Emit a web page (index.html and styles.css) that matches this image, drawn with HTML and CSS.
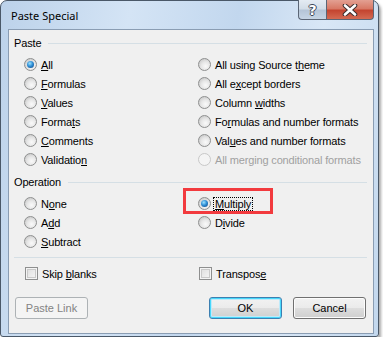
FILE: index.html
```html
<!DOCTYPE html>
<html lang="en">
  <head>
    <meta charset="UTF-8" />
    <meta name="viewport" content="width=device-width, initial-scale=1.0" />
    <title>Paste Special</title>
    <link rel="stylesheet" href="styles.css">
  </head>
  <body>
    <div class="window">
      <div class="titlebar">
        <span class="title">Paste Special</span>
        <div class="caption-buttons">
          <span class="cap-btn help">?</span>
          <span class="cap-btn close">
            <svg width="16" height="12" viewBox="0 0 16 12">
              <path d="M3 1.5 L13 10.5 M13 1.5 L3 10.5" stroke="#3a2c2c" stroke-width="4.6" stroke-linecap="round" fill="none" />
              <path d="M3 1.5 L13 10.5 M13 1.5 L3 10.5" stroke="#ffffff" stroke-width="2.6" stroke-linecap="round" fill="none" />
            </svg>
          </span>
        </div>
      </div>
      <div class="client">
        <div class="group-head"><span>Paste</span></div>
        <div class="options">
          <div class="col">
            <div class="opt"><span class="radio checked"></span><span><u>A</u>ll</span></div>
            <div class="opt"><span class="radio"></span><span><u>F</u>ormulas</span></div>
            <div class="opt"><span class="radio"></span><span><u>V</u>alues</span></div>
            <div class="opt"><span class="radio"></span><span>Forma<u>t</u>s</span></div>
            <div class="opt"><span class="radio"></span><span><u>C</u>omments</span></div>
            <div class="opt"><span class="radio"></span><span>Validatio<u>n</u></span></div>
          </div>
          <div class="col">
            <div class="opt"><span class="radio"></span><span>All using Source t<u>h</u>eme</span></div>
            <div class="opt"><span class="radio"></span><span>All e<u>x</u>cept borders</span></div>
            <div class="opt"><span class="radio"></span><span>Column <u>w</u>idths</span></div>
            <div class="opt"><span class="radio"></span><span>Fo<u>r</u>mulas and number formats</span></div>
            <div class="opt"><span class="radio"></span><span>Val<u>u</u>es and number formats</span></div>
            <div class="opt disabled"><span class="radio"></span><span>All merging conditional formats</span></div>
          </div>
        </div>

        <div class="group-head operation"><span>Operation</span></div>
        <div class="options">
          <div class="col">
            <div class="opt"><span class="radio"></span><span>N<u>o</u>ne</span></div>
            <div class="opt"><span class="radio"></span><span>A<u>d</u>d</span></div>
            <div class="opt"><span class="radio"></span><span><u>S</u>ubtract</span></div>
          </div>
          <div class="col">
            <div class="opt marked"><span class="radio checked"></span><span class="focus"><u>M</u>ultiply</span></div>
            <div class="opt"><span class="radio"></span><span>D<u>i</u>vide</span></div>
          </div>
        </div>

        <div class="separator"></div>

        <div class="options checks">
          <div class="col">
            <div class="opt"><span class="checkbox"></span><span>Skip <u>b</u>lanks</span></div>
          </div>
          <div class="col">
            <div class="opt"><span class="checkbox"></span><span>Transpos<u>e</u></span></div>
          </div>
        </div>

        <div class="buttons">
          <button class="btn" disabled>Paste Link</button>
          <span class="spacer"></span>
          <button class="btn default">OK</button>
          <button class="btn">Cancel</button>
        </div>
      </div>
    </div>
  </body>
</html>
```

FILE: styles.css
```css
body {
  margin: 0;
  background-color: #ffffff;
  font-family: "Liberation Sans", Arial, sans-serif;
  font-size: 11px;
  letter-spacing: -0.15px;
  color: #000;
}
.window {
  box-sizing: border-box;
  width: 379px;
  height: 337px;
  border: 1px solid #4a5868;
  border-radius: 7px 7px 3px 3px;
  padding: 0 4px 2px 7px;
  background: linear-gradient(100deg, #bcd2ea 0%, #d4e4f5 30%, #c2d7ee 55%, #d9e7f6 75%, #c3d8ee 100%);
  box-shadow: 2px 3px 3px rgba(0, 0, 0, 0.35);
  display: flex;
  flex-direction: column;
}
.titlebar {
  height: 28px;
  display: flex;
  align-items: flex-start;
}
.title {
  font-family: "Noto Sans", "Open Sans", sans-serif;
  font-size: 11px;
  letter-spacing: 0;
  margin: 7px 0 0 3px;
  color: #000;
}
.caption-buttons {
  margin-left: auto;
  display: flex;
  margin-top: -1px;
}
.cap-btn {
  box-sizing: border-box;
  height: 20px;
  display: flex;
  align-items: center;
  justify-content: center;
  border: 1px solid #5b6676;
  border-top: none;
}
.help {
  width: 28px;
  border-right: none;
  border-radius: 0 0 0 4px;
  background: linear-gradient(#e4ebf3 0%, #d3dde8 45%, #b5c5d7 55%, #c6d5e4 100%);
  color: #fff;
  font-family: "DejaVu Sans", sans-serif;
  font-weight: bold;
  font-size: 14px;
  text-shadow: -1px 0 #3c4656, 1px 0 #3c4656, 0 -1px #3c4656, 0 1px #3c4656;
}
.close {
  width: 48px;
  border-radius: 0 0 4px 0;
  background: linear-gradient(#e3a092 0%, #d87966 45%, #c44530 55%, #d46a52 100%);
}
.client {
  flex: 1;
  background-color: #f0f0f0;
  border: 1px solid #8a9db3;
  padding: 6px 6px 0 5px;
}
.group-head {
  display: flex;
  align-items: center;
  gap: 7px;
  height: 14px;
  color: #000;
}
.group-head::after {
  content: "";
  flex: 1;
  border-top: 1px solid #d5dfe5;
}
.group-head.operation {
  margin-top: 6px;
}
.options {
  display: flex;
  margin-top: 5px;
  padding-left: 10px;
}
.col {
  display: flex;
  flex-direction: column;
}
.col:first-child {
  width: 174px;
}
.opt {
  height: 19px;
  display: flex;
  align-items: center;
  gap: 4px;
  white-space: nowrap;
}
.opt.disabled {
  color: #a0a0a0;
}
.radio {
  box-sizing: border-box;
  width: 13px;
  height: 13px;
  border-radius: 50%;
  border: 1px solid #8e8f8f;
  background: radial-gradient(circle at 60% 65%, #fafafa 0%, #e6e6e6 45%, #cfcfcf 75%, #f4f4f4 100%);
  display: flex;
  align-items: center;
  justify-content: center;
}
.disabled .radio {
  border-color: #c8c8c8;
  background: #f4f4f4;
}
.radio.checked::after {
  content: "";
  width: 7px;
  height: 7px;
  border-radius: 50%;
  background: radial-gradient(circle at 40% 35%, #9ee3ff 0%, #2f8fd6 45%, #0c3d7a 100%);
}
.marked {
  position: relative;
}
.marked::before {
  content: "";
  position: absolute;
  left: -15px;
  top: -6px;
  width: 90px;
  height: 26px;
  box-sizing: border-box;
  border: 3px solid #f23a3e;
}
.focus {
  outline: 1px dotted #000;
  outline-offset: 0;
  padding: 0 1px;
  margin-left: -1px;
}
.separator {
  border-top: 1px solid #d5dfe5;
  margin-top: 6px;
}
.options.checks {
  margin-top: 7px;
  padding-left: 11px;
}
.checks .opt {
  height: 17px;
}
.checks .col:first-child {
  width: 174px;
}
.checkbox {
  box-sizing: border-box;
  width: 13px;
  height: 13px;
  border: 1px solid #8e8f8f;
  background: #f4f4f4;
  box-shadow: inset 0 0 0 1px #f4f4f4, inset 0 0 0 2px #c9c9c9;
  background-image: linear-gradient(135deg, #dcdcdc, #f8f8f8);
}
.buttons {
  display: flex;
  gap: 11px;
  margin-top: 15px;
  padding: 0 1px 0 1px;
}
.spacer {
  flex: 1;
}
.btn {
  box-sizing: border-box;
  width: 73px;
  height: 22px;
  font-family: "Liberation Sans", Arial, sans-serif;
  font-size: 11px;
  color: #000;
  border: 1px solid #707070;
  border-radius: 3px;
  background: linear-gradient(#f2f2f2 0%, #ebebeb 48%, #dddddd 52%, #cfcfcf 100%);
  box-shadow: inset 0 0 0 1px #fcfcfc;
  padding: 0;
}
.btn:disabled {
  border-color: #adb2b5;
  background: #f4f4f4;
  color: #838383;
  box-shadow: none;
}
.btn.default {
  border-color: #3c7fb1;
  box-shadow: inset 0 0 0 1px #48d8fb, inset 0 0 0 2px #bfeafa;
}
```
